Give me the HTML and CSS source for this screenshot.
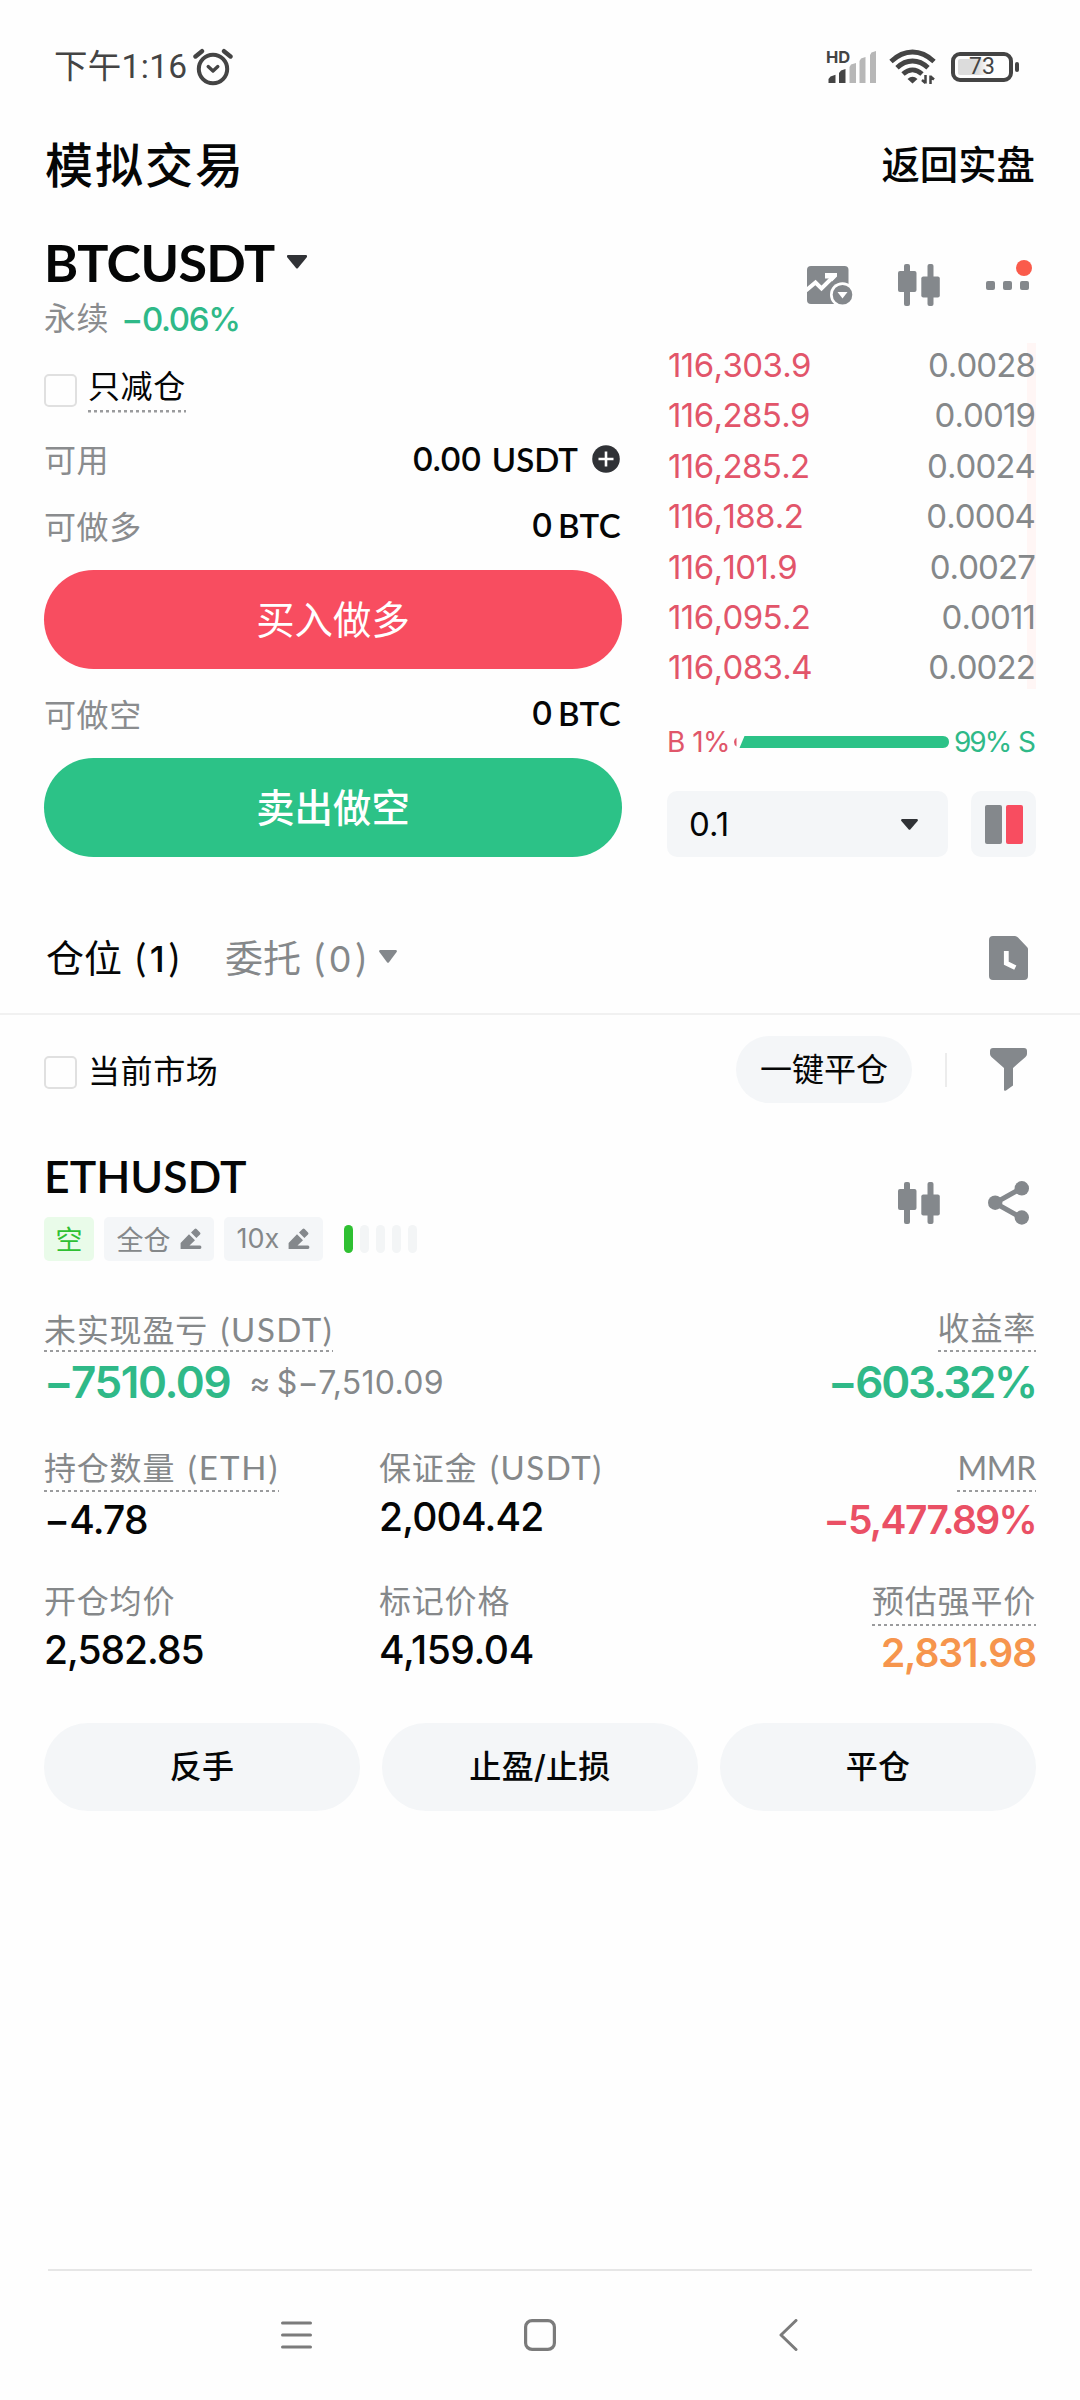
FILE: index.html
```html
<!DOCTYPE html>
<html lang="zh-CN">
<head>
<meta charset="utf-8">
<title>模拟交易</title>
<link rel="stylesheet" href="styles.css">
</head>
<body>
<svg class="defs" width="0" height="0">
  <symbol id="candles" viewBox="0 0 42 42">
    <rect x="6" y="0" width="6" height="42" rx="2"/><rect x="0" y="7" width="18.5" height="21" rx="2"/>
    <rect x="29.5" y="0" width="6" height="42" rx="2"/><rect x="23.3" y="12.5" width="18.5" height="21" rx="2"/>
  </symbol>
  <symbol id="edit" viewBox="0 0 22 22">
    <path d="M0.6 21 V15 L9 6.2 L15 12.2 L9.5 17.6 H20 q1.4 0 1.4 1.7 T20 21 Z"/><path d="M11 4.6 L14.6 1 q1-.8 2 0 L20 4.4 q1 1 0 2 L16.4 10 Z"/>
  </symbol>
</svg>
<div class="phone">
  <header class="status">
    <div class="clock"><span class="roboto">下午1:16</span>
      <svg class="alarm" width="40" height="38" viewBox="0 0 40 38" fill="none" stroke="#444" stroke-linecap="round"><circle cx="20" cy="21" r="14.2" stroke-width="4"/><path d="M2.5 8.5 L9 3.2 M37.5 8.5 L31 3.2" stroke-width="4.4"/><path d="M15.2 18.6 L20 23 L24.8 18.6" stroke-width="3.4" stroke-linejoin="round"/></svg>
    </div>
    <div class="signals">
      <div class="cell"><b>HD</b>
        <svg width="50" height="34" viewBox="0 0 50 34"><g fill="#444"><path d="M1.5 33v-4l2-2.5 5-1.8V33q0 0 0 0z"/><path d="M12 33V23l2-2.4 4.5-1.6v14z"/></g><g fill="#b7b7b7"><path d="M22.5 33V17l1.5-2.4 5-1.6v20z"/><path d="M32.5 33V11l1.5-2.4 4.5-1.6v26z"/><path d="M43 33V5l1.5-2.6L49 1v32z"/></g></svg>
      </div>
      <svg class="wifi" width="48" height="36" viewBox="0 0 48 36" fill="none" stroke="#444" stroke-width="4.8"><path d="M2 12.5 Q12 3 23.500 3 T45 12.500"/><path d="M8 18.800 Q15 12 23.500 12 T39 18.800"/><path d="M14 25 Q18.500 20.800 23.500 20.800 T33 25"/><path d="M18.500 30 Q23.500 25.500 28.500 30 L23.500 34.500z" fill="#444" stroke="none"/><path d="M36.500 26v8.500 M36.500 34 L33 31 M41.500 35v-8.500 M41.500 27.500 L45 30.500" stroke-width="2.500"/></svg>
      <div class="battery"><span>73</span></div><i class="nub"></i>
    </div>
  </header>

  <div class="title"><h1>模拟交易</h1><a>返回实盘</a></div>

  <section class="pair">
    <div>
      <div class="symbol"><span class="lato">BTCUSDT</span><svg width="20" height="14" viewBox="0 0 20 14"><path d="M1 0h18q2 0.800 .6 2.600L11 13q-1 1-2 0L.4 2.600Q-1 .8 1 0z" fill="#303236"/></svg></div>
      <div class="change"><span class="gray">永续</span><span class="num">−0.06%</span></div>
    </div>
    <div class="tools">
      <svg width="46" height="39" viewBox="0 0 46 39"><rect x="0" y="0" width="41.500" height="38" rx="4" fill="#84888c"/><path d="M-1 24.500 L8.500 16.500 L14.500 22.500 L26 11" fill="none" stroke="#fff" stroke-width="4"/><path d="M18 7h12v3.500L25 15.500l-3-3H18z" fill="#fff"/><circle cx="35.500" cy="28.700" r="12.500" fill="#fff"/><circle cx="35.500" cy="28.700" r="9.800" fill="#84888c"/><path d="M30.500 26h10l-5 6.500z" fill="#fff"/></svg>
      <svg width="42" height="42"><use href="#candles"/></svg>
      <div class="more"><i></i><i></i><i></i><b></b></div>
    </div>
  </section>

  <section class="trade">
    <div class="order">
      <div class="only"><i class="box"></i><span class="dotted">只减仓</span></div>
      <div class="line avail"><span class="gray">可用</span><span class="val"><span class="num">0.00</span> <span class="lato">USDT</span><svg width="28" height="28" viewBox="0 0 28 28"><circle cx="14" cy="14" r="13.800" fill="#303236"/><path d="M14 6.500v15M6.500 14h15" stroke="#fff" stroke-width="2.600"/></svg></span></div>
      <div class="line long"><span class="gray">可做多</span><span class="val tight"><span class="num">0</span><span class="lato">BTC</span></span></div>
      <button class="buy">买入做多</button>
      <div class="line short"><span class="gray">可做空</span><span class="val tight"><span class="num">0</span><span class="lato">BTC</span></span></div>
      <button class="sell">卖出做空</button>
    </div>
    <div class="book">
      <div class="asks">
        <div><span>116,303.9</span><em>0.0028</em></div>
        <div><span>116,285.9</span><em>0.0019</em></div>
        <div><span>116,285.2</span><em>0.0024</em></div>
        <div><span>116,188.2</span><em>0.0004</em></div>
        <div><span>116,101.9</span><em>0.0027</em></div>
        <div><span>116,095.2</span><em>0.0011</em></div>
        <div><span>116,083.4</span><em>0.0022</em></div>
      </div>
      <div class="ratio"><span class="r">B 1%</span><svg width="215" height="12" viewBox="0 0 215 12"><path d="M2.500 1.500v9Q0 9 0 6t2.500-4.500z" fill="#e0566a"/><path d="M10.500 0H209q6 .5 6 6t-6 6H5.500z" fill="#2cc287"/></svg><span class="g">99% S</span></div>
      <div class="step">
        <div class="select"><span class="num">0.1</span><svg width="17" height="11" viewBox="0 0 17 11"><path d="M1 0h15q1.500.6.600 2L9.500 10.300q-1 1-2 0L.4 2Q-.5.600 1 0z" fill="#303236"/></svg></div>
        <div class="mode"><i></i><i></i></div>
      </div>
    </div>
  </section>

  <nav class="tabs">
    <span class="tab on">仓位 <span class="lato open">(</span><span class="num">1</span><span class="lato">)</span></span>
    <span class="tab">委托 <span class="lato open">(</span><span class="num">0</span><span class="lato">)</span></span>
    <svg class="caret" width="18" height="13" viewBox="0 0 18 13"><path d="M1 0h16q1.500.6.600 2L10 12.300q-1 1-2 0L.4 2Q-.5.600 1 0z" fill="#84888c"/></svg>
    <svg class="doc" width="39" height="44" viewBox="0 0 39 44"><path d="M4 0H26q1.500 0 3 1.500L38 11q1 1 1 2V40q0 4-4 4H4q-4 0-4-4V4Q0 0 4 0z" fill="#84888c"/><path d="M17.300 15v12.200l9 4.500" fill="none" stroke="#fff" stroke-width="4.800"/></svg>
  </nav>

  <div class="filter">
    <i class="box"></i><span>当前市场</span>
    <button class="pill">一键平仓</button><i class="sep"></i>
    <svg width="37" height="43" viewBox="0 0 37 43"><path d="M3 0H34q3 0 3 3V6q0 1.500-1.500 3L23 20V37.500l-7 5q-2 1-2-.8V20L1.500 9Q0 7.500 0 6V3Q0 0 3 0z" fill="#84888c"/></svg>
  </div>

  <section class="position">
    <div class="head">
      <div>
        <h2 class="lato">ETHUSDT</h2>
        <div class="tags">
          <span class="tag side">空</span>
          <span class="tag">全仓<svg width="22" height="22"><use href="#edit"/></svg></span>
          <span class="tag"><span class="num">10x</span><svg width="22" height="22"><use href="#edit"/></svg></span>
          <span class="risk"><i></i><i></i><i></i><i></i><i></i></span>
        </div>
      </div>
      <div class="actions">
        <svg width="42" height="42"><use href="#candles"/></svg>
        <svg width="41" height="44" viewBox="0 0 41 44"><path d="M34 7 7 22l27 15" fill="none" stroke="#84888c" stroke-width="5"/><circle cx="33.800" cy="7.300" r="7.200"/><circle cx="7.200" cy="21.700" r="7.200"/><circle cx="33.800" cy="36.500" r="7.200"/></svg>
      </div>
    </div>

    <div class="pnl">
      <div><div class="label"><span class="dotted">未实现盈亏 <span class="lato par">(USDT)</span></span></div><div class="big"><span class="num profit">−7510.09</span><span class="num approx"><span class="about">≈</span>$−7,510.09</span></div></div>
      <div class="end"><div class="label"><span class="dotted">收益率</span></div><div class="big"><span class="num rate">−603.32%</span></div></div>
    </div>

    <div class="stats">
      <div class="s2"><div class="label"><span class="dotted">持仓数量 <span class="lato par eth">(ETH)</span></span></div><div class="value num low">−4.78</div></div>
      <div class="s2"><div class="label">保证金 <span class="lato par">(USDT)</span></div><div class="value num">2,004.42</div></div>
      <div class="s2 end"><div class="label"><span class="dotted"><span class="lato mmr">MMR</span></span></div><div class="value num low red">−5,477.89%</div></div>
      <div class="s3"><div class="label">开仓均价</div><div class="value num entry">2,582.85</div></div>
      <div class="s3"><div class="label">标记价格</div><div class="value num mark">4,159.04</div></div>
      <div class="s3 end"><div class="label"><span class="dotted">预估强平价</span></div><div class="value num low orange">2,831.98</div></div>
    </div>

    <div class="buttons"><button>反手</button><button>止盈/止损</button><button>平仓</button></div>
  </section>

  <footer class="sysnav">
    <svg width="31" height="32" viewBox="0 0 31 32" stroke="#7b7b7b" stroke-width="3" stroke-linecap="round"><path d="M1.500 4h28M1.500 16h28M1.500 28h28"/></svg>
    <svg class="home" width="32" height="32" viewBox="0 0 32 32"><rect x="1.600" y="1.600" width="28.800" height="28.800" rx="6.500" fill="none" stroke="#7b7b7b" stroke-width="3.200"/></svg>
    <svg class="back" width="19" height="32" viewBox="0 0 19 32" fill="none" stroke="#7b7b7b" stroke-width="3" stroke-linecap="round" stroke-linejoin="round"><path d="M17 1.500 2 16l15 14.500"/></svg>
  </footer>
</div>
</body>
</html>
```
FILE: styles.css
```css
* { box-sizing: border-box; margin: 0; padding: 0; }
body { background: #fefefe; }
svg { display: block; flex: none; }
i, em { font-style: normal; display: block; }
.defs { position: absolute; }
button { border: 0; font: inherit; color: inherit; display: block; }

.phone {
  width: 1080px; height: 2400px; display: flex; flex-direction: column;
  font-family: Inter, "Noto Sans CJK SC", sans-serif; font-size: 32px; color: #050606;
}
.lato { font-family: Lato, "Noto Sans CJK SC", sans-serif; }
.num { font-family: Inter, sans-serif; }
.gray { color: #8a8c8e; letter-spacing: .6px; }

/* status bar */
.status { height: 133px; display: flex; justify-content: space-between; padding: 0 61px 0 54px; color: #444; }
.clock, .signals { display: flex; align-items: center; }
.roboto { font: 400 33.500px/40px Roboto, "Noto Sans CJK SC", sans-serif; letter-spacing: .3px; }
.alarm { margin-left: 6px; }
.cell { position: relative; }
.cell b { position: absolute; left: -1px; top: -3px; font: 700 16.500px/20px Inter, sans-serif; }
.wifi { margin-left: 12px; }
.battery { width: 62px; height: 30px; margin-left: 14px; border: 4px solid #444; border-radius: 9px; display: flex; align-items: center; justify-content: center; background: linear-gradient(90deg, #dcdcdc 0 20px, #fefefe 30px) content-box; padding: 3px; font: 400 23px/22px Roboto, sans-serif; }
.nub { width: 4px; height: 10px; margin-left: 2px; border-radius: 2px; background: #444; }

/* page title */
.title { height: 66px; padding: 0 45px; display: flex; justify-content: space-between; align-items: center; }
.title h1 { font-size: 48px; font-weight: 500; letter-spacing: 2px; line-height: 66px; }
.title a { font-size: 38.400px; font-weight: 500; line-height: 64px; height: 66px; }

/* pair header */
.pair { padding: 33px 44px 0; height: 147px; display: flex; justify-content: space-between; }
.symbol { height: 60px; display: flex; align-items: center; font-size: 52px; font-weight: 700; line-height: 60px; letter-spacing: -.6px; }
.symbol svg { margin-left: 12px; }
.change { height: 54px; line-height: 54px; display: flex; }
.change .num { margin-left: 12px; color: #2fb988; font-size: 33px; font-weight: 500; letter-spacing: -1.300px; }
.tools { display: flex; align-items: center; height: 106px; fill: #84888c; }
.tools svg + svg { margin-left: 45px; }
.more { position: relative; display: flex; gap: 8px; margin: 0 7px 0 46px; }
.more i { width: 9px; height: 9px; border-radius: 2px; background: #84888c; }
.more b { position: absolute; left: 30px; top: -21px; width: 16px; height: 16px; border-radius: 50%; background: #fa5b4b; }

/* order form and book */
.trade { display: flex; justify-content: space-between; padding: 0 44px; height: 511px; }
.order { width: 578px; }
.only { height: 82px; display: flex; align-items: center; }
.box { width: 33px; height: 33px; border: 2.500px solid #e0e0e0; border-radius: 5px; margin-right: 11px; position: relative; top: 3px; }
.dotted { display: inline-block; padding-bottom: 3px; background: repeating-linear-gradient(90deg, #9a9b9d 0 3px, transparent 3px 6px) left bottom / 100% 2.500px no-repeat; }
.only .dotted { line-height: 46px; height: 49px; position: relative; top: 1px; letter-spacing: .6px; }
.line { display: flex; justify-content: space-between; align-items: center; padding-bottom: 3px; }
.avail { height: 64px; }
.long { height: 69px; }
.short { height: 89px; padding-bottom: 1px; }
.line .gray { margin-top: -1px; }
.val { display: flex; align-items: center; font-weight: 500; font-size: 33px; }
.val .num { letter-spacing: -.9px; }
.val .lato { font-weight: 600; margin-left: 11px; }
.val svg { margin: 0 2px 0 14px; }
.tight { margin-right: 1px; }
.tight .lato { margin-left: 6px; letter-spacing: .4px; }
.buy, .sell { width: 578px; height: 99px; border-radius: 50px; color: #fff; font-size: 38.400px; line-height: 100px; }
.buy { margin-top: 9px; background: #f84d60; }
.sell { background: #2cc287; font-weight: 500; }

.book { width: 369px; margin-top: -6px; }
.asks { height: 353px; background: linear-gradient(#fff6f5, #fff6f5) right 3px / 9px 346px no-repeat; }
.asks div { display: flex; justify-content: space-between; height: 50.400px; line-height: 51px; padding: 0 1px; font-size: 33px; letter-spacing: -.6px; font-kerning: none; }
.asks span { color: #e2556a; }
.asks em { color: #85888a; letter-spacing: -.9px; }
.ratio { height: 98px; display: flex; align-items: center; font-size: 28px; white-space: nowrap; }
.r { color: #e0566a; width: 67px; letter-spacing: -.5px; }
.g { color: #2fb988; margin: 0 2px 0 auto; letter-spacing: -2px; word-spacing: 2px; }
.step { display: flex; justify-content: space-between; }
.select, .mode { height: 66px; background: #f4f6f8; border-radius: 10px; display: flex; align-items: center; }
.select { width: 281px; justify-content: space-between; padding: 0 30px 0 22px; font-size: 33px; }
.mode { width: 65px; justify-content: center; gap: 4px; }
.mode i { width: 17px; height: 39px; background: #84888c; border-radius: 2px; }
.mode i + i { background: #f84d60; }

/* tabs */
.tabs { height: 158px; padding: 47px 52px 5px 46px; display: flex; align-items: center; border-bottom: 2px solid #f1f1f1; font-size: 38px; }
.tab { color: #85888a; white-space: pre; margin-top: -2px; }
.tab .lato { font-size: 38px; }
.tab .open { margin: 0 4px 0 3px; }
.tab .num { font-size: 36px; margin-right: 4px; }
.tab.on { color: #050606; margin-right: 46px; }
.tab.on .num { font-weight: 500; }
.caret { margin-left: 13px; }
.doc { margin: 3px 0 0 auto; }

.filter { height: 110px; padding: 0 53px 1px 44px; display: flex; align-items: center; letter-spacing: .6px; }
.filter .box { margin-right: 11px; top: 3px; }
.filter > span { margin-top: -1px; }
.pill { margin-left: auto; width: 176px; height: 67px; border-radius: 34px; background: #f4f6f8; line-height: 67px; }
.sep { width: 2px; height: 34px; margin: 0 43px 0 33px; background: #ececec; }

/* position card */
.position { padding: 21px 44px 0; }
.head { display: flex; justify-content: space-between; height: 163px; }
.head h2 { font-size: 44.500px; font-weight: 600; line-height: 60px; }
.tags { display: flex; margin-top: 11px; height: 44px; font-size: 27px; color: #85888a; }
.tag { display: flex; align-items: center; background: #f4f6f8; border-radius: 5px; padding: 0 12.500px 1px; margin-right: 10px; }
.tag .num { font-size: 27px; }
.tag svg { margin-left: 9px; fill: #84888c; }
.side { background: #e9fbe9; color: #2fc032; padding: 0 11.500px 1px; }
.risk { display: flex; gap: 7px; margin: 8px 0 0 11px; }
.risk i { width: 9px; height: 28px; border-radius: 5px; background: #f3f5f6; }
.risk i:first-child { background: #2fc032; }
.actions { height: 114px; display: flex; align-items: center; gap: 48px; margin-right: 7px; fill: #84888c; }

.label { color: #85888a; white-space: pre; letter-spacing: .8px; }
.par { font-size: 33px; margin-left: 3px; letter-spacing: 1.500px; }
.par.eth { letter-spacing: 2px; }
.mmr { letter-spacing: -.3px; }
.end { text-align: right; }
.pnl { display: flex; justify-content: space-between; height: 137px; }
.pnl .label, .pnl .dotted { line-height: 40px; height: 43px; }
.big { height: 60px; display: flex; align-items: center; justify-content: flex-end; color: #2fb988; font-weight: 600; font-size: 44px; }
.pnl > :first-child .big { justify-content: flex-start; }
.profit { letter-spacing: -1.400px; }
.rate { letter-spacing: -2.300px; }
.approx { color: #85888a; font-weight: 400; font-size: 32px; margin-left: 19px; letter-spacing: .3px; }
.about { margin-right: 6px; }

.stats { display: grid; grid-template-columns: 335px 1fr 1fr; grid-auto-rows: 134px; height: 277px; }
.s2 .label { height: 44px; line-height: 43px; }
.s3 .label { height: 43px; line-height: 43px; }
.s2 .dotted { height: 46px; }
.value { font-size: 39px; font-weight: 500; line-height: 53px; letter-spacing: -.8px; }
.value.entry { letter-spacing: -1px; }
.value.mark { letter-spacing: -.4px; }
.value.low { padding-top: 3px; }
.value.red { color: #ea5065; font-weight: 600; letter-spacing: -1.700px; }
.value.orange { color: #f6954d; font-weight: 600; letter-spacing: -1.100px; }

.buttons { display: flex; gap: 22px; }
.buttons button { flex: 1; height: 88px; border-radius: 44px; background: #f4f6f8; font-weight: 500; line-height: 88px; letter-spacing: .3px; }

/* system navigation */
.sysnav { margin: auto 48px 0; height: 131px; border-top: 2px solid #e6e6e6; padding: 0 0 2px 233px; display: flex; align-items: center; }
.home { margin-left: 212px; }
.back { margin-left: 223px; }
```
